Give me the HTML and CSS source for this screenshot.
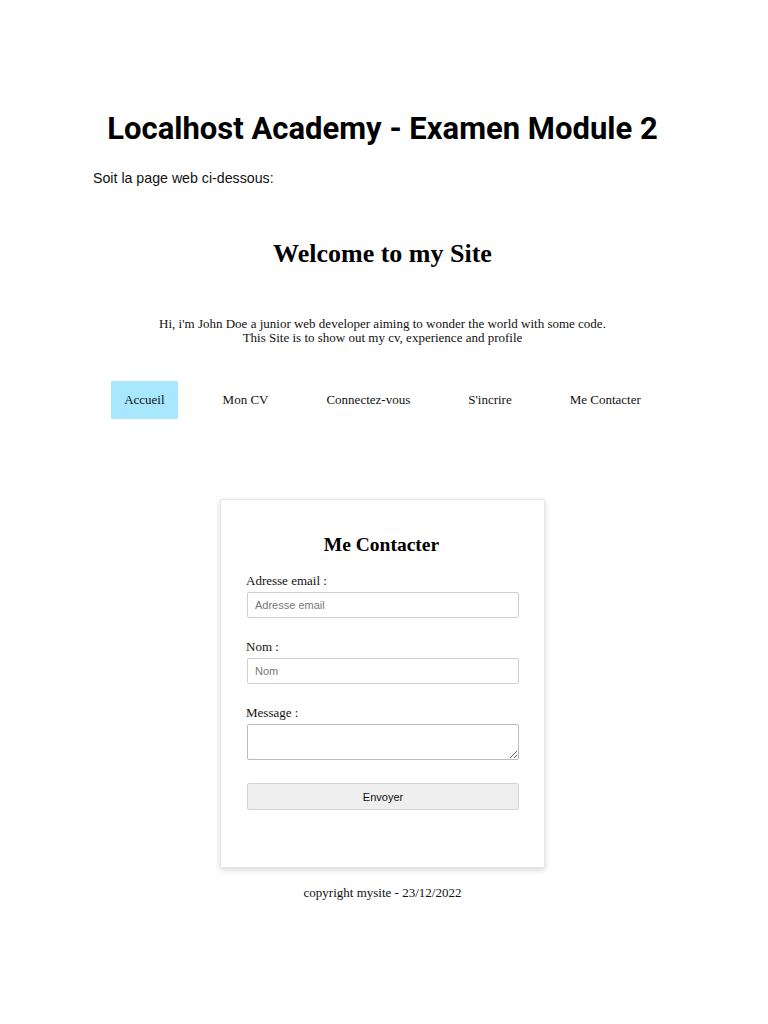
FILE: index.html
```html
<!DOCTYPE html>
<html lang="fr">
<head>
<meta charset="utf-8">
<title>Localhost Academy - Examen Module 2</title>
<link rel="stylesheet" href="styles.css">
</head>
<body>
<main class="page">
  <h1 class="doc-title">Localhost Academy - Examen Module 2</h1>
  <p class="doc-intro">Soit la page web ci-dessous:</p>

  <section class="site">
    <h2 class="site-title">Welcome to my Site</h2>
    <p class="site-desc">Hi, i'm John Doe a junior web developer aiming to wonder the world with some code.<br>This Site is to show out my cv, experience and profile</p>

    <nav class="site-nav">
      <a class="nav-item active">Accueil</a>
      <a class="nav-item">Mon CV</a>
      <a class="nav-item">Connectez-vous</a>
      <a class="nav-item">S'incrire</a>
      <a class="nav-item">Me Contacter</a>
    </nav>

    <div class="card">
      <h3 class="card-title">Me Contacter</h3>
      <form class="form">
        <div class="field">
          <label class="label">Adresse email :</label>
          <input class="input" type="text" placeholder="Adresse email">
        </div>
        <div class="field">
          <label class="label">Nom :</label>
          <input class="input" type="text" placeholder="Nom">
        </div>
        <div class="field">
          <label class="label">Message :</label>
          <textarea class="textarea"></textarea>
        </div>
        <button class="btn" type="button">Envoyer</button>
      </form>
    </div>

    <p class="footer">copyright mysite - 23/12/2022</p>
  </section>
</main>
</body>
</html>
```

FILE: styles.css
```css
html, body {
  margin: 0;
  padding: 0;
  background: #ffffff;
}

.page {
  color: #000;
}

.doc-title {
  font-family: Roboto, "Liberation Sans", sans-serif;
  font-weight: 700;
  font-size: 31px;
  line-height: 34px;
  text-align: center;
  margin: 112px 3px 0 0;
  color: #000;
}

.doc-intro {
  font-family: "Liberation Sans", Arial, sans-serif;
  font-size: 14.2px;
  line-height: 17px;
  margin: 24px 0 0 93px;
  color: #111;
}

.site {
  font-family: "Liberation Serif", "Times New Roman", serif;
  display: flex;
  flex-direction: column;
  align-items: center;
  margin-right: 3px;
}

.site-title {
  font-size: 26px;
  font-weight: 700;
  line-height: 30px;
  margin: 52px 0 0 0;
}

.site-desc {
  font-size: 13px;
  line-height: 14px;
  text-align: center;
  margin: 48px 0 0 0;
  color: #111;
}

.site-nav {
  display: flex;
  justify-content: center;
  gap: 32px;
  margin-top: 36px;
}

.nav-item {
  font-size: 13px;
  line-height: 38px;
  padding: 0 13px;
  color: #111;
}

.nav-item.active {
  background: #a8e8ff;
}

.card {
  width: 325px;
  box-sizing: border-box;
  margin-top: 80px;
  padding: 28px 27px 57px 25px;
  border: 1px solid #e6e6e6;
  border-radius: 2px;
  box-shadow: 0 2px 6px rgba(0,0,0,0.16);
  background: #fff;
}

.card-title {
  font-size: 19.5px;
  font-weight: 700;
  line-height: 22px;
  text-align: center;
  margin: 6px 0 17px;
}

.form {
  display: flex;
  flex-direction: column;
}

.field {
  display: flex;
  flex-direction: column;
  margin-bottom: 21px;
}

.label {
  font-size: 13px;
  line-height: 15px;
  margin-bottom: 4px;
  color: #111;
}

.input, .textarea {
  box-sizing: border-box;
  width: 272px;
  margin-left: 1px;
  border: 1px solid #cfcfcf;
  border-radius: 2px;
  font-family: "Liberation Sans", Arial, sans-serif;
  font-size: 11px;
  padding: 0 7px;
  background: #fff;
}

.input {
  height: 26px;
}

.input::placeholder {
  color: #777;
}

.textarea {
  height: 36px;
  resize: vertical;
  border-color: #bdbdbd;
}

.btn {
  box-sizing: border-box;
  width: 272px;
  height: 27px;
  margin: 2px 0 0 1px;
  border: 1px solid #d3d3d3;
  border-radius: 2px;
  background: #efefef;
  font-family: "Liberation Sans", Arial, sans-serif;
  font-size: 11px;
  color: #111;
}

.footer {
  font-size: 13px;
  line-height: 15px;
  margin: 17px 0 0 0;
  color: #111;
}
```
